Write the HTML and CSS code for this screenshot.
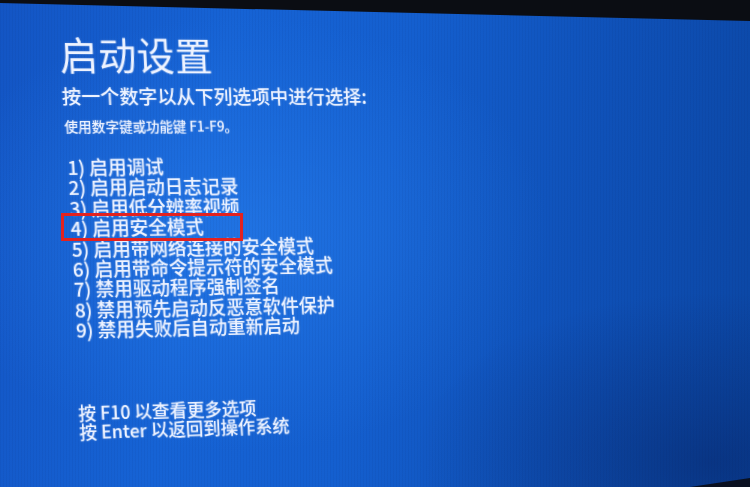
FILE: index.html
```html
<!DOCTYPE html>
<html lang="zh-CN">
<head>
<meta charset="utf-8">
<title>启动设置</title>
<link rel="stylesheet" href="styles.css">
</head>
<body>
<div class="screen">
  <div class="content">
    <h1 class="title">启动设置</h1>
    <p class="subtitle">按一个数字以从下列选项中进行选择:</p>
    <p class="hint">使用数字键或功能键 F1-F9。</p>
    <ol class="options">
      <li>1) 启用调试</li>
      <li>2) 启用启动日志记录</li>
      <li>3) 启用低分辨率视频</li>
      <li>4) 启用安全模式</li>
      <li>5) 启用带网络连接的安全模式</li>
      <li>6) 启用带命令提示符的安全模式</li>
      <li>7) 禁用驱动程序强制签名</li>
      <li>8) 禁用预先启动反恶意软件保护</li>
      <li>9) 禁用失败后自动重新启动</li>
    </ol>
    <div class="footer">
      <p>按 F10 以查看更多选项</p>
      <p>按 Enter 以返回到操作系统</p>
    </div>
  </div>
  <span class="mark" aria-hidden="true"></span>
  <svg class="bezel" width="750" height="487" viewBox="0 0 750 487" aria-hidden="true">
    <polygon points="0,0 750,0 750,21 375,12 0,3" fill="#0b0d13"/>
    <polygon points="690,487 750,478 750,487" fill="#0a1020"/>
  </svg>
</div>
</body>
</html>
```

FILE: styles.css
```css
html, body {
  margin: 0;
  padding: 0;
}

body {
  width: 750px;
  height: 487px;
  overflow: hidden;
  font-family: "Noto Sans CJK SC", "Noto Sans", sans-serif;
  color: #eef3ff;
}

.screen {
  position: relative;
  width: 750px;
  height: 487px;
  overflow: hidden;
  background:
    repeating-linear-gradient(90deg, rgba(0, 0, 40, 0.04) 0 1px, rgba(0, 0, 0, 0) 1px 3px),
    radial-gradient(ellipse 55% 60% at 32% 48%, rgba(45, 135, 245, 0.45), rgba(45, 135, 245, 0) 75%),
    radial-gradient(ellipse 40% 35% at 95% 95%, rgba(5, 30, 90, 0.45), rgba(5, 30, 90, 0) 100%),
    linear-gradient(100deg, #1355c4 0%, #1663d5 28%, #145fcf 50%, #0f51b8 75%, #0b46a3 100%);
}

.content {
  padding: 31px 0 0 62px;
  transform: perspective(1000px) rotateY(5.7deg) skewX(3deg);
  transform-origin: 62px 100px;
  font-weight: 500;
  text-shadow: 0 0 2px rgba(220, 235, 255, 0.35);
}

.title {
  margin: 0;
  font-size: 38.5px;
  line-height: 44px;
  font-weight: 400;
  letter-spacing: 0.5px;
}

.subtitle {
  margin: 9px 0 0 0;
  font-size: 19.4px;
  line-height: 24px;
}

.hint {
  margin: 9px 0 0 1px;
  font-size: 13.8px;
  line-height: 18px;
}

.options {
  list-style: none;
  margin: 22px 0 0 0;
  padding: 0 0 0 2px;
  font-size: 19px;
  line-height: 20.4px;
}

.options li {
  white-space: nowrap;
}

.footer {
  margin-top: 63px;
  font-size: 18px;
  line-height: 19px;
}

.footer p {
  margin: 0;
  white-space: nowrap;
}

.mark {
  position: absolute;
  left: 61px;
  top: 213px;
  width: 182px;
  height: 28px;
  box-sizing: border-box;
  border: 3px solid #e3221f;
}

.bezel {
  position: absolute;
  left: 0;
  top: 0;
  pointer-events: none;
}
```
